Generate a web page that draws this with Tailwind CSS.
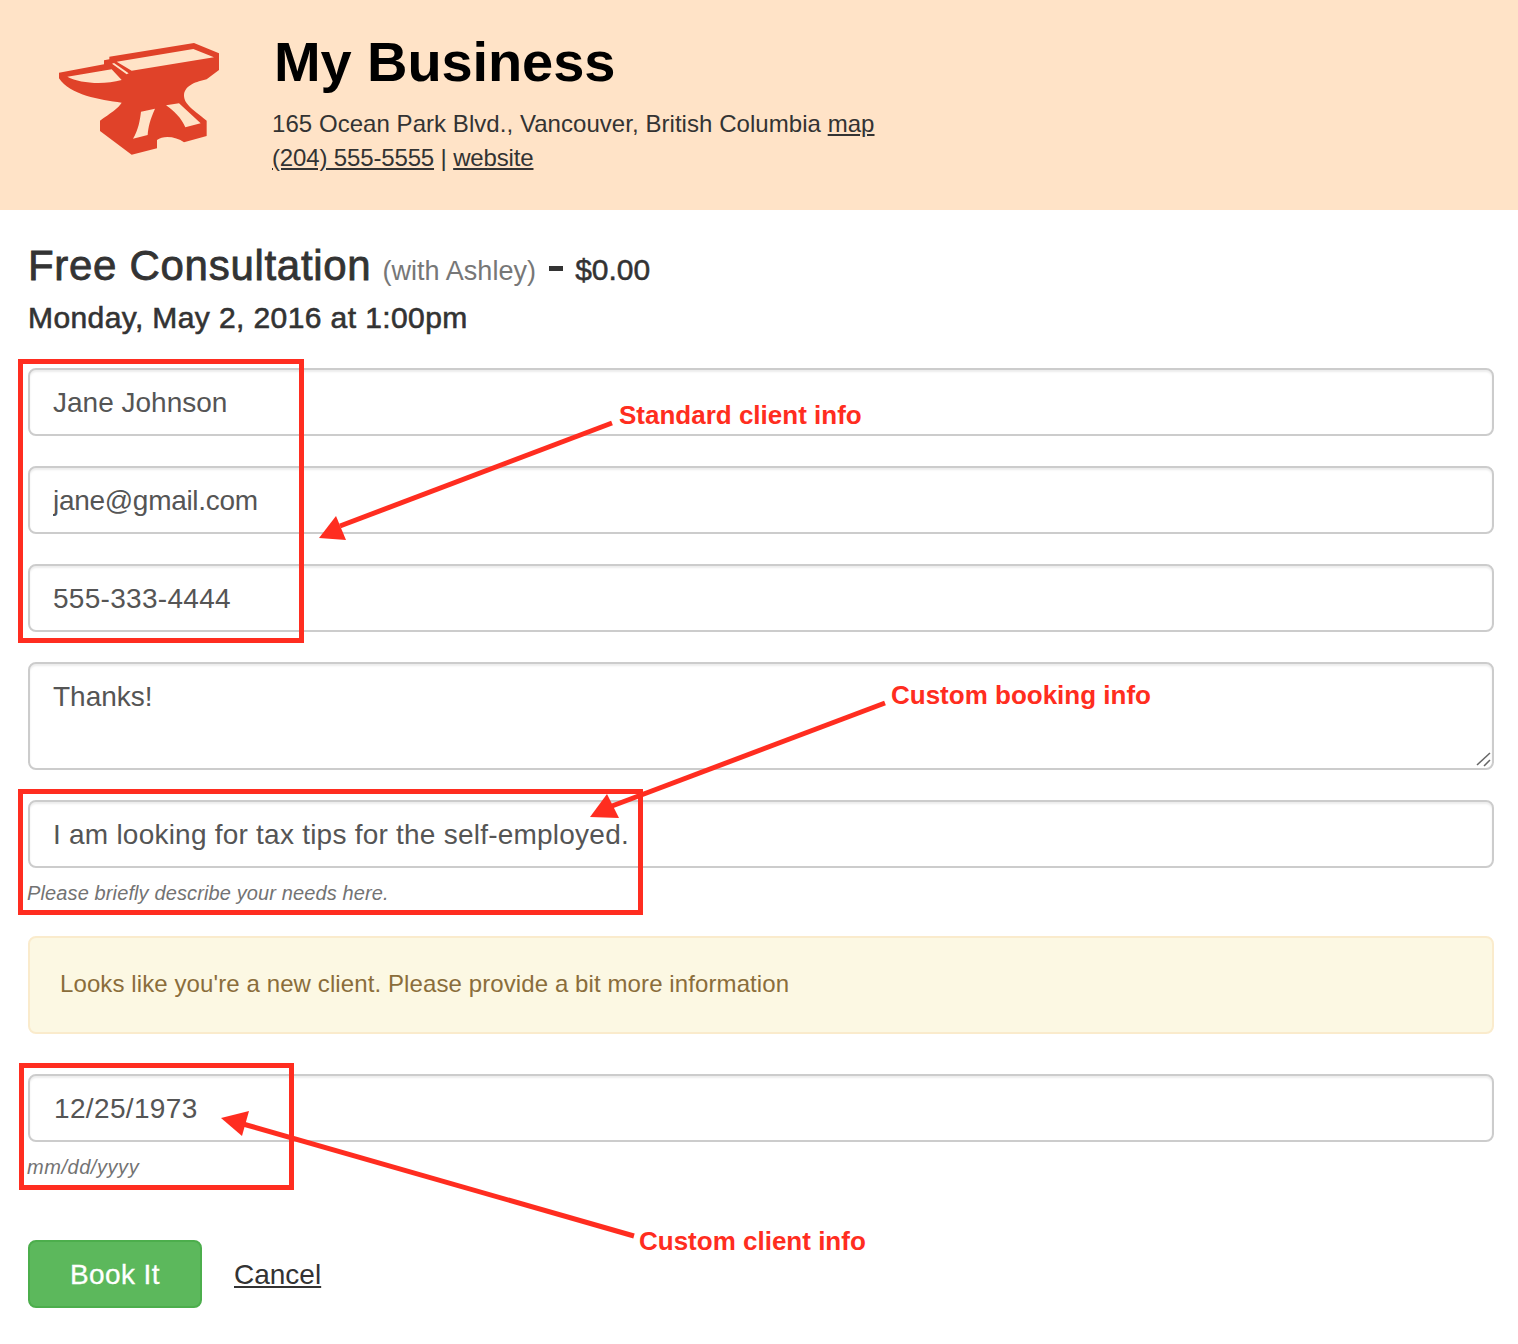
<!DOCTYPE html>
<html lang="en">
<head>
    <meta charset="UTF-8">
    <meta name="viewport" content="width=device-width, initial-scale=1.0">
    <title>Book appointment</title>
    <script src="https://cdn.jsdelivr.net/npm/@tailwindcss/browser@4"></script>
</head>
<body class="bg-white font-['Liberation_Sans',Arial,sans-serif] text-[#333]">
<div class="relative h-[1344px] overflow-hidden">

    <!-- business header -->
    <header class="h-[210px] bg-[#ffe3c7] flex">
        <svg class="w-[200px] h-[150px] mt-[20px] ml-[40px] shrink-0" viewBox="0 0 600 450">
            <path fill="#e04229" fill-rule="evenodd" d="M57 158 L192 133 L192 121 L208 118 L208 110 L462 69 L537 100 L537 150 L500 178 C470 185 435 195 432 225 C432 250 450 262 500 302 L500 348 L432 367 C410 350 370 345 351 360 L351 385 L275 404 L180 333 L180 302 C210 280 235 265 245 248 C180 240 90 225 57 175 Z M230 125 L460 87 L522 112 L275 152 Z M82 170 L215 148 L245 180 C190 195 120 190 82 170 Z M216 131 L222 129 L266 160 L260 163 Z M303 275 L345 266 C330 300 325 320 323 345 L279 356 C295 330 300 300 303 275 Z M378 256 L417 250 L482 310 L436 322 C425 295 400 270 378 256 Z"/>
        </svg>
        <div class="ml-[32px]">
            <h1 class="mt-[30px] ml-[2px] text-[56px] leading-[64px] font-bold text-black tracking-[-0.1px]">My Business</h1>
            <p class="mt-[13px] text-[24px] leading-[34px] text-[#333] tracking-[0.05px]">165 Ocean Park Blvd., Vancouver, British Columbia <a class="underline" href="#">map</a></p>
            <p class="text-[24px] leading-[34px] text-[#333] tracking-[-0.15px]"><a class="underline" href="#">(204) 555-5555</a> | <a class="underline" href="#">website</a></p>
        </div>
    </header>

    <main class="pl-[28px] pr-[24px]">
        <div class="mt-[30px] flex items-baseline h-[52px]">
            <h2 class="text-[42px] leading-[52px] font-normal tracking-[0.7px] [-webkit-text-stroke:0.8px_#333]">Free Consultation</h2>
            <span class="ml-[11px] text-[27px] text-[#777] tracking-[0.05px]">(with Ashley)</span>
            <span class="ml-[13px] w-[14px] h-[5px] bg-[#333] self-center mt-[4px]"></span>
            <span class="ml-[12px] text-[30px] leading-[34px] font-normal [-webkit-text-stroke:0.5px_#333]">$0.00</span>
        </div>
        <h3 class="mt-[6px] text-[30px] leading-[40px] font-normal [-webkit-text-stroke:0.6px_#333] tracking-[0.4px]">Monday, May 2, 2016 at 1:00pm</h3>

        <form class="mt-[30px]">
            <div class="flex flex-col gap-[30px]">
                <input class="w-full h-[68px] px-[23px] pt-[2px] border-2 border-[#ccc] rounded-[8px] text-[28px] text-[#555] shadow-[inset_0_2px_2px_rgba(0,0,0,0.075)]" value="Jane Johnson">
                <input class="w-full h-[68px] px-[23px] pt-[2px] border-2 border-[#ccc] rounded-[8px] text-[28px] text-[#555] tracking-[-0.3px] shadow-[inset_0_2px_2px_rgba(0,0,0,0.075)]" value="jane@gmail.com">
                <input class="w-full h-[68px] px-[23px] pt-[2px] border-2 border-[#ccc] rounded-[8px] text-[28px] text-[#555] tracking-[0.3px] shadow-[inset_0_2px_2px_rgba(0,0,0,0.075)]" value="555-333-4444">
                <textarea class="block w-full h-[108px] px-[23px] py-[13px] border-2 border-[#ccc] rounded-[8px] text-[28px] leading-[40px] text-[#555] resize-none shadow-[inset_0_2px_2px_rgba(0,0,0,0.075)]">Thanks!</textarea>
                <div>
                    <input class="w-full h-[68px] px-[23px] pt-[2px] border-2 border-[#ccc] rounded-[8px] text-[28px] text-[#555] tracking-[0.23px] shadow-[inset_0_2px_2px_rgba(0,0,0,0.075)]" value="I am looking for tax tips for the self-employed.">
                    <p class="mt-[10px] -ml-px text-[20px] leading-[30px] italic text-[#737373] tracking-[0.12px]">Please briefly describe your needs here.</p>
                </div>
            </div>

            <div class="mt-[28px] h-[98px] px-[30px] pb-[2px] flex items-center bg-[#fcf8e3] border-2 border-[#faebcc] rounded-[8px] text-[24px] tracking-[0.1px] text-[#8a6d3b]">Looks like you're a new client. Please provide a bit more information</div>

            <input class="mt-[40px] w-full h-[68px] px-[24px] pt-[2px] border-2 border-[#ccc] rounded-[8px] text-[28px] text-[#555] tracking-[0.35px] shadow-[inset_0_2px_2px_rgba(0,0,0,0.075)]" value="12/25/1973">
            <p class="mt-[10px] -ml-px text-[20px] leading-[30px] italic text-[#737373] tracking-[0.55px]">mm/dd/yyyy</p>

            <div class="mt-[58px] flex items-center">
                <button type="button" class="w-[174px] h-[68px] pt-[2px] bg-[#5cb85c] border-2 border-[#4cae4c] rounded-[8px] text-[28px] tracking-[0.4px] text-white [-webkit-text-stroke:0.3px_#fff]">Book It</button>
                <a class="ml-[32px] mt-[2px] text-[28px] underline text-[#333]" href="#">Cancel</a>
            </div>
        </form>
    </main>

    <!-- annotations drawn over the form -->
    <svg class="absolute inset-0 pointer-events-none" width="1518" height="1344" viewBox="0 0 1518 1344">
        <g fill="none" stroke="#666" stroke-width="1.5">
            <path d="M1477 765 L1490 753"/>
            <path d="M1484 766 L1490 760"/>
        </g>
        <g fill="none" stroke="#ff2d20" stroke-width="5">
            <rect x="20.5" y="361.5" width="281" height="279"/>
            <rect x="20.5" y="791.5" width="620" height="121"/>
            <rect x="21.5" y="1065.5" width="270" height="122"/>
            <path d="M612 423 L340 526"/>
            <path d="M885 703 L612 806"/>
            <path d="M634 1236 L243 1124"/>
        </g>
        <g fill="#ff2d20">
            <path d="M319 538 L336 516 L346 540 Z"/>
            <path d="M590 817 L607 794 L619 818 Z"/>
            <path d="M221 1118 L249 1111 L242 1136 Z"/>
        </g>
    </svg>
    <span class="absolute left-[619px] top-[400px] text-[26px] leading-[30px] font-bold text-[#ff2d20]">Standard client info</span>
    <span class="absolute left-[891px] top-[680px] text-[26px] leading-[30px] font-bold text-[#ff2d20]">Custom booking info</span>
    <span class="absolute left-[639px] top-[1226px] text-[26px] leading-[30px] font-bold text-[#ff2d20]">Custom client info</span>
</div>
</body>
</html>
